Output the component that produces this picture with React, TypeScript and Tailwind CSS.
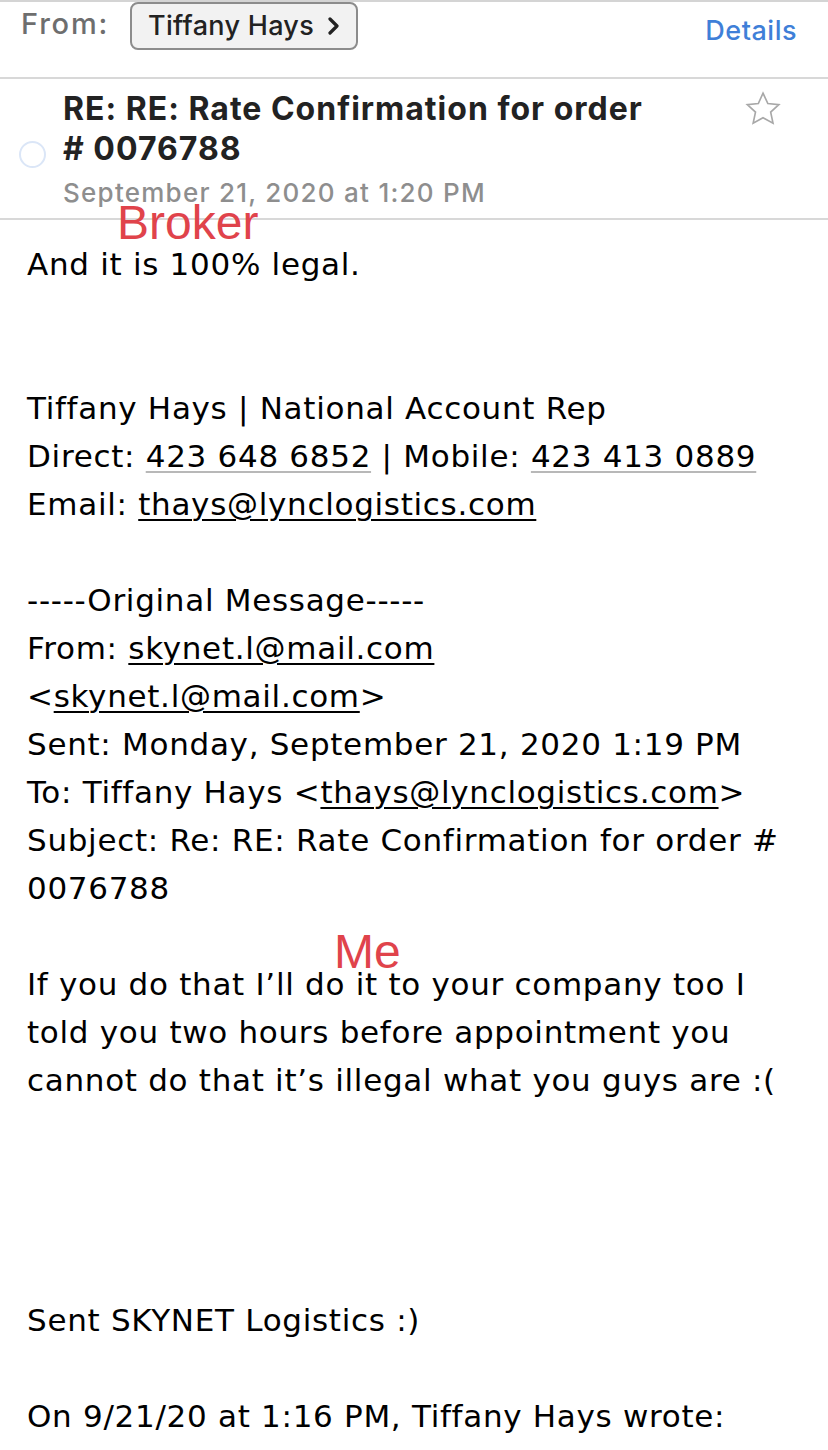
import React from "react";

const body = { fontFamily: '"DejaVu Sans", Verdana, sans-serif' };
const ui = { fontFamily: 'Inter, Roboto, "Liberation Sans", sans-serif' };

function U({ children, gray }: { children: React.ReactNode; gray?: boolean }) {
  return (
    <span className={gray ? "underline decoration-[#b8b8b8] decoration-2 underline-offset-4" : "underline decoration-black decoration-2 underline-offset-4"}>
      {children}
    </span>
  );
}

export default function App() {
  return (
    <div className="w-[828px] h-[1450px] bg-white overflow-hidden relative">
      {/* From row */}
      <div className="border-t-2 border-[#d4d4d4] h-[77px] flex items-start justify-between pl-[21px] pr-[31px]" style={ui}>
        <div className="flex items-center gap-[21px]">
          <span className="text-[29px] tracking-[1.8px] text-[#6e6e6e] font-medium mt-[-4px]">From:</span>
          <div className="h-[48px] px-[16px] rounded-[8px] border-2 border-[#8c8c8c] bg-[#f2f2f2] flex items-center gap-[14px]">
            <span className="text-[27px] tracking-[0.3px] text-[#222] font-medium">Tiffany Hays</span>
            <svg width="12" height="18" viewBox="0 0 12 18"><path d="M2 2 L9 9 L2 16" fill="none" stroke="#222" strokeWidth="3.2" strokeLinecap="round" strokeLinejoin="round" /></svg>
          </div>
        </div>
        <span className="text-[27px] tracking-[0.5px] text-[#3f7fd8] font-medium mt-[9px]">Details</span>
      </div>
      {/* Title */}
      <div className="border-t-2 border-[#d8d8d8] border-b-2 h-[143px] flex relative" style={ui}>
        <div className="w-[63px] flex items-start justify-center">
          <div className="mt-[62px] ml-[2px] w-[27px] h-[27px] rounded-full border-2 border-[#dbe6f7]" />
        </div>
        <div className="flex-1 pt-[10px]">
          <div className="text-[32px] leading-[40px] font-bold text-[#222] tracking-[1px] whitespace-nowrap">
            RE: RE: Rate Confirmation for order<br /># 0076788
          </div>
          <div className="text-[26px] text-[#8e8e8e] font-medium mt-[4px] tracking-[1.25px]">September 21, 2020 at 1:20 PM</div>
        </div>
        <div className="w-[86px] pt-[10px]">
          <svg width="42" height="40" viewBox="0 0 24 24"><path d="M12 2.5l2.9 6.2 6.6.7-4.9 4.5 1.4 6.6L12 17.2l-5.9 3.3 1.4-6.6-4.9-4.5 6.6-.7z" fill="none" stroke="#a8a8a8" strokeWidth="1" strokeLinejoin="miter" /></svg>
        </div>
      </div>
      {/* Body */}
      <div className="pl-[27px] pr-[4px] text-[31px] leading-[48px] text-black tracking-[0.7px]" style={body}>
        <div className="pt-[20px]">And it is 100% legal.</div>
        <div className="h-[96px]" />
        <div>Tiffany Hays | National Account Rep</div>
        <div className="whitespace-nowrap">Direct: <U gray>423 648 6852</U> | Mobile: <U gray>423 413 0889</U></div>
        <div>Email: <U>thays@lynclogistics.com</U></div>
        <div className="h-[48px]" />
        <div>-----Original Message-----</div>
        <div>From: <U>skynet.l@mail.com</U></div>
        <div>&lt;<U>skynet.l@mail.com</U>&gt;</div>
        <div className="whitespace-nowrap">Sent: Monday, September 21, 2020 1:19 PM</div>
        <div className="whitespace-nowrap">To: Tiffany Hays &lt;<U>thays@lynclogistics.com</U>&gt;</div>
        <div className="whitespace-nowrap">Subject: Re: RE: Rate Confirmation for order #</div>
        <div>0076788</div>
        <div className="h-[48px]" />
        <div className="whitespace-nowrap">If you do that I’ll do it to your company too I</div>
        <div className="whitespace-nowrap">told you two hours before appointment you</div>
        <div className="whitespace-nowrap">cannot do that it’s illegal what you guys are :(</div>
        <div className="h-[192px]" />
        <div>Sent SKYNET Logistics :)</div>
        <div className="h-[48px]" />
        <div className="whitespace-nowrap">On 9/21/20 at 1:16 PM, Tiffany Hays wrote:</div>
      </div>
      {/* Annotations */}
      <span className="absolute left-[117px] top-[199px] text-[48px] leading-none text-[#e0434b]" style={{ fontFamily: '"Liberation Sans", Arial, sans-serif' }}>Broker</span>
      <span className="absolute left-[334px] top-[928px] text-[48px] leading-none text-[#e0434b]" style={{ fontFamily: '"Liberation Sans", Arial, sans-serif' }}>Me</span>
    </div>
  );
}
